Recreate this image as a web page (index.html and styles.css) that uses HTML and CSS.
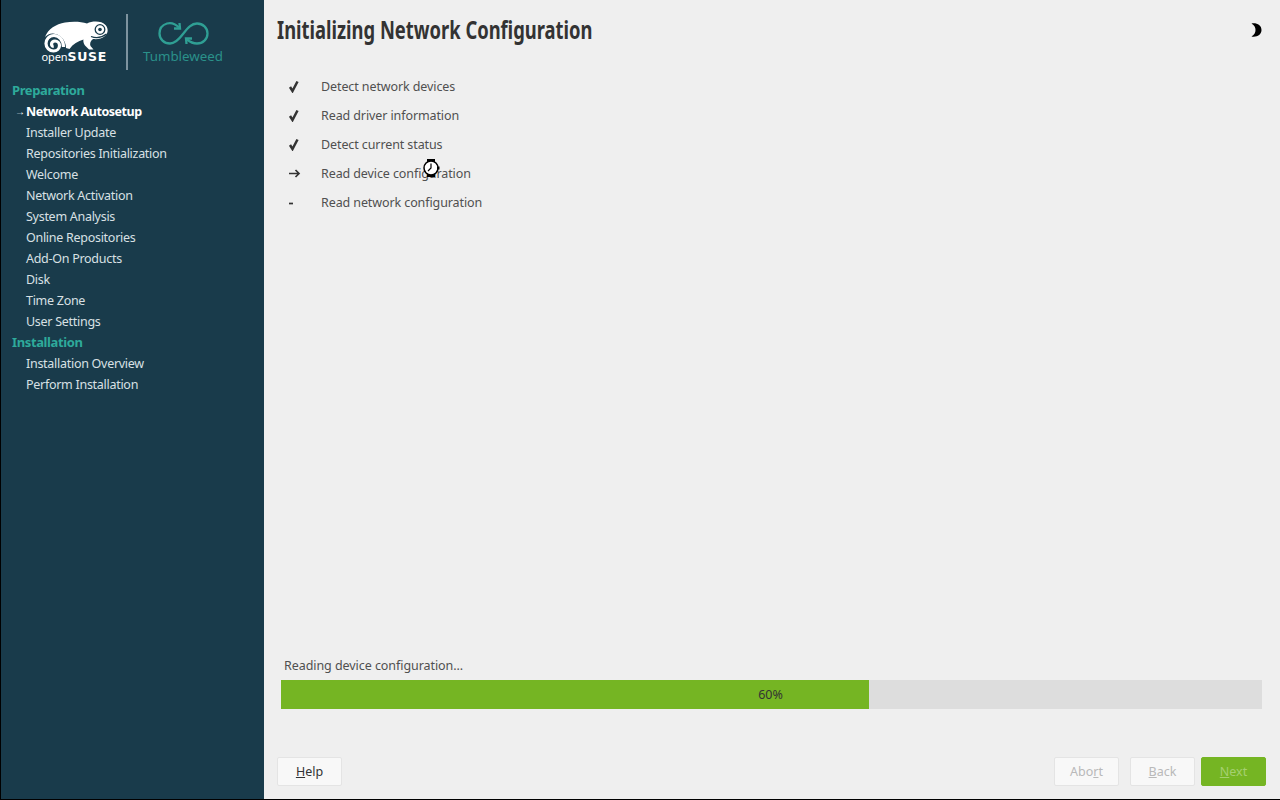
FILE: index.html
```html
<!DOCTYPE html>
<html lang="en">
<head>
<meta charset="utf-8">
<title>openSUSE Tumbleweed Installation</title>
<link rel="stylesheet" href="styles.css">
</head>
<body>
<div class="screen">
  <aside class="sidebar">
    <div class="logo">
      <svg class="logo-svg" width="264" height="80" viewBox="0 0 264 80">
        <path class="geeko" d="M45 37C48 29 56 24 65 22.500C73 21 81 21.500 87 23.500C93 20.500 102 21 105.500 25C108.500 28.500 108.500 33 105 36C101.500 39 97 39.500 93 39C90.500 41 89.500 43.500 90.500 46L93.500 49.500L89 49.500L85 45.500C83.500 43.500 83 41 83.500 39.500C78 41 73 44 69.500 49L66 48C66 40 60 34 53 33.500C50 33.300 47 35 45 37Z"/>
        <path class="spiral" d="M63.500 47C63.500 40 59 35.500 54 35.500C49 35.500 46 39.500 46 43.500C46 48 49.500 51 53.500 51C57 51 59.500 48.500 59.500 45.500C59.500 43 57.500 41 55 41C53 41 51.500 42.500 51.500 44.300C51.500 45.500 52.500 46.400 53.700 46.200"/>
        <circle class="eye-ring" cx="100" cy="29.500" r="4.800"/>
        <circle class="eye-dot" cx="100" cy="29.500" r="1.800"/>
        <path class="mouth" d="M91 36.500C96 38.500 102 37.500 106.500 34"/>
        <text class="open" x="41.500" y="60.500">open</text>
        <text class="suse" x="67.500" y="60.500">SUSE</text>
        <path class="logo-rule" d="M127 14V70"/>
        <path class="infinity" d="M179 27.500C175 23.500 170.500 22.500 167 23.500C162 25 159.500 29 159.500 33.500C159.500 39 164 43.500 170 43.500C175 43.500 178.500 40 183 34C188 27.500 191.500 23.500 197 23.500C203 23.500 207.500 28 207.500 33.500C207.500 39 203 43.500 197 43.500C193.500 43.500 190 42 187 39.500"/>
        <path class="infinity-tip" d="M174 28.500L180 28.500L179.500 23M192 38.500L186 38.500L186.500 44"/>
        <text class="tumble" x="143" y="61">Tumbleweed</text>
      </svg>
    </div>
    <nav class="steps">
      <div class="stage">Preparation</div>
      <div class="step current"><span class="marker">→</span>Network Autosetup</div>
      <div class="step">Installer Update</div>
      <div class="step">Repositories Initialization</div>
      <div class="step">Welcome</div>
      <div class="step">Network Activation</div>
      <div class="step">System Analysis</div>
      <div class="step">Online Repositories</div>
      <div class="step">Add-On Products</div>
      <div class="step">Disk</div>
      <div class="step">Time Zone</div>
      <div class="step">User Settings</div>
      <div class="stage">Installation</div>
      <div class="step">Installation Overview</div>
      <div class="step">Perform Installation</div>
    </nav>
  </aside>
  <main class="content">
    <header class="head">
      <h1 class="title">Initializing Network Configuration</h1>
      <svg class="moon" width="12" height="14" viewBox="0 0 12 14"><path d="M1.500 0.500C6.500 -0.500 11.500 2 11.500 7C11.500 12 6.500 14.500 1.500 13.500C4.500 11.500 5.500 9.500 5.500 7C5.500 4.500 4.500 2.500 1.500 0.500Z"/></svg>
    </header>
    <ul class="tasks">
      <li class="task"><span class="task-icon"><svg class="icon" width="13" height="13" viewBox="0 0 13 13"><path d="M2 7L4.500 11L9.500 1.500"/></svg></span>Detect network devices</li>
      <li class="task"><span class="task-icon"><svg class="icon" width="13" height="13" viewBox="0 0 13 13"><path d="M2 7L4.500 11L9.500 1.500"/></svg></span>Read driver information</li>
      <li class="task"><span class="task-icon"><svg class="icon" width="13" height="13" viewBox="0 0 13 13"><path d="M2 7L4.500 11L9.500 1.500"/></svg></span>Detect current status</li>
      <li class="task"><span class="task-icon"><svg class="icon thin" width="13" height="13" viewBox="0 0 13 13"><path d="M1 6.500H11M7.500 3L11 6.500L7.500 10"/></svg></span>Read device configuration</li>
      <li class="task"><span class="task-icon"><svg class="icon thin" width="13" height="13" viewBox="0 0 13 13"><path d="M1 7.500H5"/></svg></span>Read network configuration</li>
    </ul>
    <section class="progress-area">
      <div class="progress-label">Reading device configuration...</div>
      <div class="progress"><div class="progress-fill" style="width:59.9%"></div><span class="progress-text">60%</span></div>
    </section>
    <footer class="buttons">
      <button class="btn"><u>H</u>elp</button>
      <div class="btn-right">
        <button class="btn off">Abo<u>r</u>t</button>
        <button class="btn off"><u>B</u>ack</button>
        <button class="btn off next"><u>N</u>ext</button>
      </div>
    </footer>
  </main>
  <svg class="cursor" width="18" height="18" viewBox="0 0 18 18">
    <rect x="5" y="0" width="8" height="18" fill="#000"/>
    <circle cx="9" cy="9" r="7" fill="#fff" stroke="#000" stroke-width="1.500"/>
    <rect x="15" y="7.500" width="2.500" height="3" fill="#000"/>
    <path d="M9 4.500V9L6 12" fill="none" stroke="#000" stroke-width="1.200"/>
  </svg>
</div>
</body>
</html>
```
FILE: styles.css
```css
* { box-sizing: border-box; }
html, body { margin: 0; padding: 0; width: 1280px; height: 800px; overflow: hidden; }
body { font-family: "Noto Sans", "Open Sans", sans-serif; background: #000; }
.screen { position: relative; display: flex; width: 1280px; height: 799px; margin-bottom: 1px; padding-left: 1px; background: #000; }
.sidebar { width: 263px; flex: none; background: #193b4b; color: #e9eef0; }
.logo { height: 80px; margin-left: -1px; }
.logo-svg { display: block; }
.geeko { fill: #fff; }
.spiral { fill: none; stroke: #fff; stroke-width: 3.200; }
.eye-ring { fill: none; stroke: #193b4b; stroke-width: 1.300; }
.eye-dot { fill: #193b4b; }
.mouth { fill: none; stroke: #193b4b; stroke-width: 1.300; }
.open { font: 11px "Noto Sans", sans-serif; fill: #fff; letter-spacing: -0.100px; }
.suse { font: bold 12.500px "DejaVu Sans", sans-serif; fill: #fff; letter-spacing: 0.700px; }
.logo-rule { stroke: #9fb2bb; stroke-width: 1.500; }
.infinity, .infinity-tip { fill: none; stroke: #2f9f94; stroke-width: 2.300; }
.tumble { font: 13.300px "Noto Sans", sans-serif; fill: #2a918a; }
.steps { display: flex; flex-direction: column; }
.stage { height: 21px; line-height: 20px; padding-left: 11px; font-size: 13px; font-weight: 700; letter-spacing: -0.380px; color: #2eaa9b; }
.step { position: relative; height: 21px; line-height: 21px; padding-left: 25px; font-size: 12.500px; letter-spacing: -0.280px; color: #d8e0e4; }
.step.current { font-weight: 700; letter-spacing: -0.450px; color: #fff; }
.marker { position: absolute; left: 14px; top: 0; font-size: 10px; font-weight: 700; }
.content { flex: 1; display: flex; flex-direction: column; background: #efefef; padding: 0 14px 13px 13px; }
.head { display: flex; justify-content: space-between; align-items: center; height: 59px; padding-right: 4px; }
.title { margin: -2px 0 0; font-size: 25px; font-weight: 700; color: #333; white-space: nowrap; transform: scaleX(0.735); transform-origin: left center; }
.moon { fill: #000; flex: none; }
.tasks { list-style: none; margin: 13px 0 0; padding: 0 0 0 11px; flex: 1; }
.task { display: flex; align-items: center; height: 29px; font-size: 12.500px; letter-spacing: -0.100px; color: #505050; }
.task-icon { display: flex; width: 33px; flex: none; }
.icon { fill: none; stroke: #333; stroke-width: 2.500; }
.icon.thin { stroke-width: 1.700; }
.progress-area { padding: 0 4px; margin-bottom: 48px; }
.progress-label { height: 17px; line-height: 17px; margin: 0 0 6px 3px; font-size: 12.500px; letter-spacing: -0.060px; color: #505050; }
.progress { position: relative; height: 29px; background: #dddddd; }
.progress-fill { height: 100%; background: #75b523; }
.progress-text { position: absolute; inset: 0; display: flex; align-items: center; justify-content: center; padding-right: 2px; font-size: 12.500px; color: #333; }
.buttons { display: flex; justify-content: space-between; align-items: center; }
.btn-right { display: flex; gap: 11px; }
.btn { width: 65px; height: 29px; padding: 0; border: 1px solid #e4e4e4; border-radius: 2px; background: #f8f8f8; font: 12.500px "Noto Sans", sans-serif; color: #333; }
.btn-right .btn:last-child { margin-left: -5px; }
.btn.off { color: #b9b9b9; }
.btn.next { background: #75b523; border-color: #75b523; color: #a5d071; }
.cursor { position: absolute; left: 422px; top: 159px; }
```
